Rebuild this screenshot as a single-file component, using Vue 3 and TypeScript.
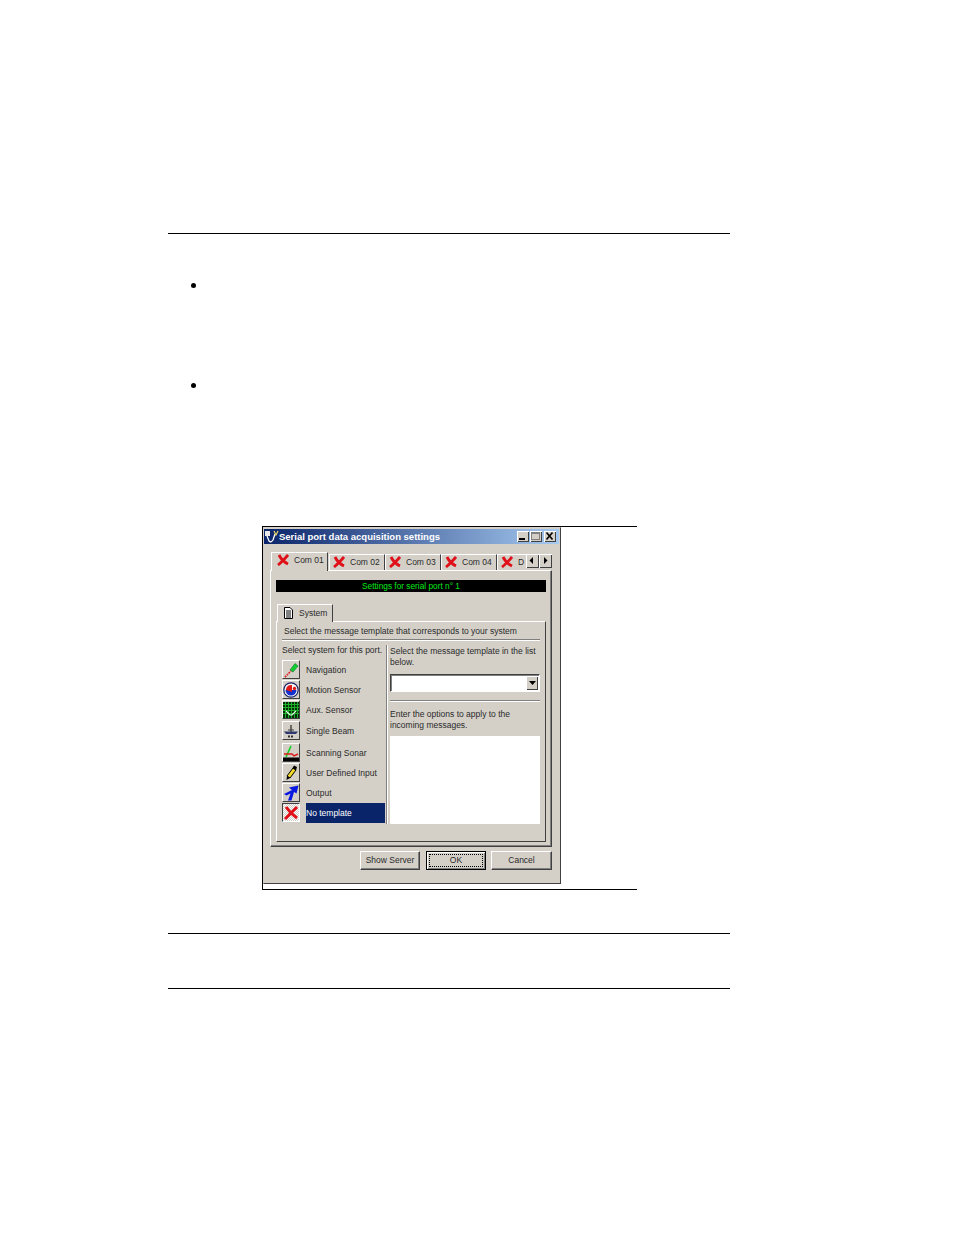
<script setup lang="ts">
const comTabs = ['Com 02', 'Com 03', 'Com 04', 'D']
const systems = [
  { key: 'nav', label: 'Navigation', h: 20 },
  { key: 'motion', label: 'Motion Sensor', h: 20 },
  { key: 'aux', label: 'Aux. Sensor', h: 21 },
  { key: 'beam', label: 'Single Beam', h: 22 },
  { key: 'sonar', label: 'Scanning Sonar', h: 20 },
  { key: 'user', label: 'User Defined Input', h: 20 },
  { key: 'output', label: 'Output', h: 20 },
  { key: 'none', label: 'No template', h: 20 },
]
</script>

<template>
  <div class="page">
    <div class="rule"></div>
    <ul class="bullets">
      <li class="bullet first"></li>
      <li class="bullet second"></li>
    </ul>
    <div class="figure">
      <div class="dialog">
        <div class="titlebar">
          <svg class="appicon" viewBox="0 0 14 14" width="14" height="14">
            <rect x="0" y="1" width="5" height="5" fill="#e8e8e8" />
            <path d="M2 6 L4 11 Q6 13 8 10 L10 4" fill="none" stroke="#fff" stroke-width="1.3" />
            <path d="M9 1 L11 5 L13 1" fill="none" stroke="#e8d860" stroke-width="1.2" />
          </svg>
          <span class="title">Serial port data acquisition settings</span>
          <span class="caption-btns">
            <span class="cbtn"><svg viewBox="0 0 11 10" width="11" height="10"><rect x="2" y="7" width="6" height="2" fill="#000" /></svg></span>
            <span class="cbtn"><svg viewBox="0 0 11 10" width="11" height="10"><rect x="1.5" y="1.5" width="8" height="7" fill="none" stroke="#808080" /><rect x="1" y="1" width="9" height="2" fill="#808080" /></svg></span>
            <span class="cbtn close"><svg viewBox="0 0 11 10" width="11" height="10"><path d="M2.5 1.5 L8.5 8.5 M8.5 1.5 L2.5 8.5" stroke="#000" stroke-width="1.6" /></svg></span>
          </span>
        </div>

        <div class="body">
          <div class="tabstrip">
            <div class="tab active">
              <svg class="xicon" viewBox="0 0 12 12" width="12" height="12"><path d="M1 11 Q5 8 11 1 M2 1 Q5 7 11 10" fill="none" stroke="#e01018" stroke-width="2.8" /></svg>
              <span>Com 01</span>
            </div>
            <div v-for="t in comTabs" :key="t" class="tab">
              <svg class="xicon" viewBox="0 0 12 12" width="12" height="12"><path d="M1 11 Q5 8 11 1 M2 1 Q5 7 11 10" fill="none" stroke="#e01018" stroke-width="2.8" /></svg>
              <span>{{ t }}</span>
            </div>
            <div class="scroller">
              <span class="sbtn"><svg viewBox="0 0 12 13" width="12" height="13"><path d="M7 3 L3.5 6.5 L7 10 Z" fill="#000" /></svg></span>
              <span class="sbtn"><svg viewBox="0 0 12 13" width="12" height="13"><path d="M5 3 L8.5 6.5 L5 10 Z" fill="#000" /></svg></span>
            </div>
          </div>

          <div class="panel">
            <div class="banner">Settings for serial port n° 1</div>
            <div class="subtab">
              <svg viewBox="0 0 11 12" width="11" height="12"><path d="M1.5 .5 H7 L9.5 3 V11.5 H1.5 Z" fill="#fff" stroke="#000" /><path d="M3 4 H8 M3 6 H8 M3 8 H8 M3 10 H8" stroke="#000" /></svg>
              <span>System</span>
            </div>
            <div class="subpanel">
              <div class="heading">Select the message template that corresponds to your system</div>
              <div class="columns">
                <div class="left">
                  <div class="left-title">Select system for this port.</div>
                  <div v-for="s in systems" :key="s.key" class="sysrow" :style="{ height: s.h + 'px' }">
                    <span class="iconbtn" :class="{ pressed: s.key === 'none' }">
                      <svg viewBox="0 0 16 16" width="16" height="16">
                        <template v-if="s.key === 'nav'">
                          <path d="M7 8 L12 1.5 L15 4 L10 10 Z" fill="#10d030" stroke="#087020" stroke-width=".6" />
                          <path d="M2 15 L8 9" stroke="#e02020" stroke-width="1.8" stroke-dasharray="1.6 1" />
                        </template>
                        <template v-else-if="s.key === 'motion'">
                          <circle cx="8" cy="8" r="7.2" fill="#f4f4f4" stroke="#182068" stroke-width="1.2" />
                          <path d="M2.5 8 L13.5 8 A5.5 5.5 0 0 1 2.5 8 Z" fill="#1030d0" />
                          <path d="M3 8 A5 5 0 0 1 9 3 L9 10 Z" fill="#e01818" />
                          <circle cx="11.5" cy="6.5" r="1.7" fill="#e01818" />
                        </template>
                        <template v-else-if="s.key === 'aux'">
                          <rect x="0" y="0" width="16" height="16" fill="#062c06" />
                          <path d="M0 2.5 H16 M0 5.5 H16 M0 8.5 H16 M0 11.5 H16 M2.5 0 V16 M5.5 0 V16 M8.5 0 V16 M11.5 0 V16 M14.5 0 V16" stroke="#1cb02c" stroke-width="1" />
                          <path d="M3 9 L7 13 H9 L13 9" fill="none" stroke="#e0ffe0" stroke-width="1.2" />
                        </template>
                        <template v-else-if="s.key === 'beam'">
                          <path d="M8 2 V9" stroke="#000" />
                          <path d="M5 7 H11" stroke="#404040" />
                          <path d="M1 8.5 H15 L13 11 H3 Z" fill="#303870" />
                          <path d="M5 13.5 H11" stroke="#303030" stroke-width="1.8" stroke-dasharray="2 1" />
                        </template>
                        <template v-else-if="s.key === 'sonar'">
                          <path d="M3 12 L8 1" stroke="#10d020" stroke-width="1.6" />
                          <path d="M1 9 H9 L11 11 L15 9" fill="none" stroke="#e01818" stroke-width="1.4" />
                          <rect x="0" y="12.5" width="16" height="3.5" fill="#000" />
                        </template>
                        <template v-else-if="s.key === 'user'">
                          <path d="M10 3 L13 5 L7 13 L4 11 Z" fill="#f0d828" stroke="#000" />
                          <path d="M9.5 3 L13 5.5 L14 2 L11 .5 Z" fill="#000" />
                          <path d="M4 11 L3.5 15 L7 13 Z" fill="#000" />
                        </template>
                        <template v-else-if="s.key === 'output'">
                          <path d="M15.5 .5 L6 2.5 L9 5 L1 9 L3.5 10.5 L7.5 8.5 L5 15.5 L8.5 15.5 L11 7 L13.5 8.5 Z" fill="#0818e0" />
                        </template>
                        <template v-else>
                          <path d="M2 14 Q7 9 14 2 M3 2 Q7 8 14 13" fill="none" stroke="#e01018" stroke-width="3" />
                        </template>
                      </svg>
                    </span>
                    <span class="syslabel" :class="{ selected: s.key === 'none' }">{{ s.label }}</span>
                  </div>
                </div>
                <div class="vsep"></div>
                <div class="right">
                  <div class="note first-note">Select the message template in the list below.</div>
                  <div class="combo">
                    <span class="combo-btn"><svg viewBox="0 0 9 6" width="9" height="6"><path d="M1 1 H8 L4.5 5 Z" fill="#000" /></svg></span>
                  </div>
                  <div class="hsep"></div>
                  <div class="note">Enter the options to apply to the incoming messages.</div>
                  <div class="textarea"></div>
                </div>
              </div>
            </div>
          </div>

          <div class="actions">
            <div class="btn">Show Server</div>
            <div class="btn default"><span class="focus">OK</span></div>
            <div class="btn cancel">Cancel</div>
          </div>
        </div>
      </div>
    </div>
    <div class="rule rule-a"></div>
    <div class="rule rule-b"></div>
  </div>
</template>

<style>
html, body { background: #fff; }
</style>

<style scoped>
.page {
  box-sizing: border-box;
  width: 954px;
  height: 1235px;
  padding: 233px 224px 0 168px;
  background: #fff;
  font-family: "Liberation Sans", Arial, sans-serif;
  font-size: 8.5px;
  color: #2a2a2a;
}
.rule { height: 1px; background: #000; }
.rule-a { margin-top: 43px; }
.rule-b { margin-top: 54px; }
.bullets { display: flex; flex-direction: column; list-style: none; margin: 0; padding: 0 0 0 23px; height: 292px; }
.bullet { width: 5px; height: 5px; border-radius: 50%; background: #000; }
.first { margin-top: 49px; }
.second { margin-top: 95px; }

.figure {
  box-sizing: border-box;
  width: 375px;
  height: 364px;
  margin-left: 94px;
  border-top: 1px solid #000;
  border-bottom: 1px solid #000;
  border-left: 1px solid #000;
}
.dialog {
  box-sizing: border-box;
  width: 298px;
  height: 357px;
  padding: 1px 1px 1px 0;
  background: #d4d0c8;
  border: 1px solid;
  border-color: #d4d0c8 #404040 #404040 #d4d0c8;
}
.titlebar {
  display: flex;
  align-items: center;
  height: 15px;
  padding-left: 1px;
  background: linear-gradient(90deg, #0a246a, #a6caf0);
  color: #fff;
}
.title { font-size: 9.5px; font-weight: 700; white-space: nowrap; }
.caption-btns { display: flex; margin-left: auto; margin-right: 3px; gap: 1px; }
.cbtn {
  box-sizing: border-box;
  display: block;
  width: 12px;
  height: 11px;
  background: #d4d0c8;
  box-shadow: inset 1px 1px 0 #fff, inset -1px -1px 0 #404040;
}
.cbtn svg { display: block; }
.close { margin-left: 1px; }

.body { padding: 8px 0 0 6px; }
.tabstrip {
  position: relative;
  z-index: 1;
  display: flex;
  align-items: flex-start;
  width: 282px;
  height: 19px;
  margin-bottom: -1px;
  padding-left: 1px;
  box-sizing: border-box;
  overflow: hidden;
}
.tab {
  box-sizing: border-box;
  flex: none;
  display: flex;
  align-items: center;
  gap: 5px;
  width: 56px;
  height: 16px;
  margin-top: 2px;
  padding: 0 0 2px 3px;
  background: #d4d0c8;
  border-top: 1px solid #fff;
  border-left: 1px solid #fff;
  border-right: 1px solid #404040;
  white-space: nowrap;
}
.tab.active { width: 57px; height: 19px; margin-top: 0; margin-right: 1px; padding: 0 0 5px 5px; }
.xicon { flex: none; }
.scroller { position: absolute; right: 0; top: 2px; display: flex; }
.sbtn {
  box-sizing: border-box;
  display: block;
  width: 13px;
  height: 14px;
  background: #d4d0c8;
  box-shadow: inset 1px 1px 0 #fff, inset -1px -1px 0 #404040;
}
.sbtn svg { display: block; }

.panel {
  box-sizing: border-box;
  width: 282px;
  height: 277px;
  padding: 9px 5px 0 5px;
  border: 1px solid;
  border-color: #fff #404040 #404040 #fff;
  box-shadow: inset -1px -1px 0 #808080;
}
.banner {
  height: 12px;
  line-height: 12px;
  background: #000;
  color: #00e818;
  text-align: center;
  font-size: 8.3px;
}
.subtab {
  box-sizing: border-box;
  position: relative;
  z-index: 1;
  display: flex;
  align-items: center;
  gap: 5px;
  width: 56px;
  height: 18px;
  margin: 12px 0 -1px 1px;
  padding: 0 0 2px 5px;
  background: #d4d0c8;
  border-top: 1px solid #fff;
  border-left: 1px solid #fff;
  border-right: 1px solid #404040;
}
.subpanel {
  box-sizing: border-box;
  width: 270px;
  height: 221px;
  padding: 0 5px 0 5px;
  border: 1px solid;
  border-color: #fff #404040 #404040 #fff;
}
.heading {
  box-sizing: border-box;
  height: 18px;
  line-height: 19px;
  padding-left: 2px;
  border-bottom: 1px solid #808080;
  box-shadow: 0 1px 0 #fff;
  white-space: nowrap;
}
.columns { display: flex; padding-top: 5px; }
.left { width: 104px; flex: none; }
.left-title { height: 15px; line-height: 11px; white-space: nowrap; }
.sysrow { display: flex; align-items: flex-start; }
.iconbtn {
  box-sizing: border-box;
  flex: none;
  display: flex;
  align-items: center;
  justify-content: center;
  width: 18px;
  height: 19px;
  border: 1px solid;
  border-color: #fff #404040 #404040 #fff;
}
.iconbtn.pressed {
  border-color: #404040 #fff #fff #404040;
  background: repeating-conic-gradient(#fff 0 25%, #d4d0c8 0 50%) 0 0 / 2px 2px;
}
.syslabel {
  display: block;
  box-sizing: border-box;
  margin-left: 6px;
  width: 79px;
  height: 20px;
  line-height: 20px;
  white-space: nowrap;
}
.syslabel.selected { background: #0a246a; color: #fff; }
.vsep { flex: none; width: 1px; height: 179px; background: #808080; box-shadow: 1px 0 0 #fff; }
.right { flex: none; width: 150px; margin-left: 3px; }
.note { line-height: 11px; height: 22px; }
.first-note { margin-top: 1px; }
.combo {
  box-sizing: border-box;
  position: relative;
  height: 18px;
  margin-top: 6px;
  background: #fff;
  border: 1px solid;
  border-color: #404040 #fff #fff #404040;
  box-shadow: inset 1px 1px 0 #808080;
}
.combo-btn {
  position: absolute;
  right: 1px;
  top: 1px;
  width: 12px;
  height: 14px;
  display: flex;
  align-items: center;
  justify-content: center;
  background: #d4d0c8;
  box-shadow: inset 1px 1px 0 #fff, inset -1px -1px 0 #404040;
}
.hsep { height: 1px; margin-top: 8px; background: #808080; box-shadow: 0 1px 0 #fff; }
.hsep + .note { margin-top: 8px; }
.textarea { height: 88px; margin-top: 5px; background: #fff; }

.actions { display: flex; width: 282px; padding-top: 4px; padding-left: 90px; box-sizing: border-box; }
.btn {
  box-sizing: border-box;
  width: 60px;
  height: 19px;
  line-height: 17px;
  text-align: center;
  border: 1px solid;
  border-color: #fff #404040 #404040 #fff;
  box-shadow: inset -1px -1px 0 #808080;
}
.btn.default {
  margin-left: 6px;
  padding: 2px;
  border: 1px solid #000;
  box-shadow: inset 1px 1px 0 #fff, inset -1px -1px 0 #808080;
  line-height: 11px;
}
.focus { display: block; height: 13px; border: 1px dotted #000; box-sizing: border-box; line-height: 11px; }
.btn.cancel { margin-left: 5px; width: 61px; }
</style>
